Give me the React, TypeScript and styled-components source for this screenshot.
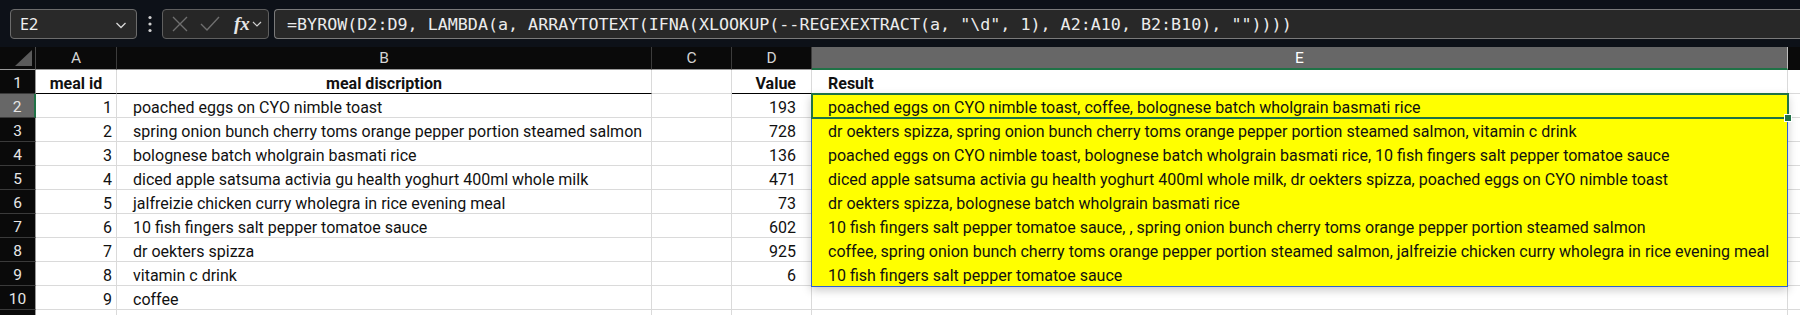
import styled, { createGlobalStyle } from 'styled-components'

const GlobalStyle = createGlobalStyle`
  html, body {
    margin: 0;
    padding: 0;
    background: #0a0a0a;
    overflow: hidden;
  }
`

type Row = [string | number, string, string, string | number, string]

const header: Row = ['meal id', 'meal discription', '', 'Value', 'Result']

const rows: Row[] = [
  [1, 'poached eggs on CYO nimble toast', '', 193, 'poached eggs on CYO nimble toast, coffee, bolognese batch wholgrain basmati rice'],
  [2, 'spring onion bunch cherry toms orange pepper portion steamed salmon', '', 728, 'dr oekters spizza, spring onion bunch cherry toms orange pepper portion steamed salmon, vitamin c drink'],
  [3, 'bolognese batch wholgrain basmati rice', '', 136, 'poached eggs on CYO nimble toast, bolognese batch wholgrain basmati rice, 10 fish fingers salt pepper tomatoe sauce'],
  [4, 'diced apple satsuma activia gu health yoghurt 400ml whole milk', '', 471, 'diced apple satsuma activia gu health yoghurt 400ml whole milk, dr oekters spizza, poached eggs on CYO nimble toast'],
  [5, 'jalfreizie chicken curry wholegra in rice evening meal', '', 73, 'dr oekters spizza, bolognese batch wholgrain basmati rice'],
  [6, '10 fish fingers salt pepper tomatoe sauce', '', 602, '10 fish fingers salt pepper tomatoe sauce, , spring onion bunch cherry toms orange pepper portion steamed salmon'],
  [7, 'dr oekters spizza', '', 925, 'coffee, spring onion bunch cherry toms orange pepper portion steamed salmon, jalfreizie chicken curry wholegra in rice evening meal'],
  [8, 'vitamin c drink', '', 6, '10 fish fingers salt pepper tomatoe sauce'],
  [9, 'coffee', '', '', ''],
  ['', '', '', '', ''],
]

const columns = ['A', 'B', 'C', 'D', 'E']
const formula = '=BYROW(D2:D9, LAMBDA(a, ARRAYTOTEXT(IFNA(XLOOKUP(--REGEXEXTRACT(a, "\\d", 1), A2:A10, B2:B10), ""))))'

const App = () => {
  return (
    <Page>
      <GlobalStyle />
      <FormulaBar>
        <NameBox>
          <span>E2</span>
          <Chevron width="14" height="14" viewBox="0 0 14 14">
            <path d="M2.5 5 L7 9.5 L11.5 5" fill="none" stroke="#d8d8d8" strokeWidth="1.3" />
          </Chevron>
        </NameBox>
        <Dots>
          <svg width="6" height="20" viewBox="0 0 6 20">
            <circle cx="3" cy="3.5" r="1.6" fill="#d0d0d0" />
            <circle cx="3" cy="10" r="1.6" fill="#d0d0d0" />
            <circle cx="3" cy="16.5" r="1.6" fill="#d0d0d0" />
          </svg>
        </Dots>
        <ButtonBox>
          <svg width="20" height="20" viewBox="0 0 20 20">
            <path d="M3 3 L17 17 M17 3 L3 17" stroke="#6f6f6f" strokeWidth="1.4" fill="none" />
          </svg>
          <svg width="22" height="20" viewBox="0 0 22 20">
            <path d="M2 10 L8 16 L20 3" stroke="#6f6f6f" strokeWidth="1.4" fill="none" />
          </svg>
          <Fx>fx</Fx>
          <svg width="12" height="12" viewBox="0 0 12 12">
            <path d="M2 4 L6 8 L10 4" fill="none" stroke="#cfcfcf" strokeWidth="1.2" />
          </svg>
        </ButtonBox>
        <FormulaInput>{formula}</FormulaInput>
      </FormulaBar>

      <Sheet>
        <Corner>
          <svg width="17" height="16" viewBox="0 0 17 16">
            <polygon points="17,0 17,16 0,16" fill="#5b5b5b" />
          </svg>
        </Corner>
        {columns.map((c) => (
          <ColHead key={c} $active={c === 'E'}>{c}</ColHead>
        ))}
        <ColHead $edge />

        <RowHead>1</RowHead>
        <Cell $align="center" $bold $rule>{header[0]}</Cell>
        <Cell $align="center" $bold $rule>{header[1]}</Cell>
        <Cell />
        <Cell $align="right" $bold $rule $indent>{header[3]}</Cell>
        <Cell $bold $pad>{header[4]}</Cell>
        <Gutter />

        {rows.map((r, i) => {
          const n = i + 2
          const spill = n >= 2 && n <= 9
          return [
            // row 11 is only a sliver at the bottom edge, its number falls outside
            <RowHead key={`h${n}`} $active={n === 2}>{n <= 10 ? n : ''}</RowHead>,
            <Cell key={`a${n}`} $align="right">{r[0]}</Cell>,
            <Cell key={`b${n}`} $pad>{r[1]}</Cell>,
            <Cell key={`c${n}`}>{r[2]}</Cell>,
            <Cell key={`d${n}`} $align="right" $indent>{r[3]}</Cell>,
            <Cell key={`e${n}`} $pad $fill={spill}>{r[4]}</Cell>,
            <Gutter key={`g${n}`} />,
          ]
        })}

        <SpillFrame />
        <ActiveCell>
          <Handle />
        </ActiveCell>
      </Sheet>
    </Page>
  )
}

const Page = styled.div`
  width: 1800px;
  height: 315px;
  overflow: hidden;
  background: #0a0a0a;
`

const FormulaBar = styled.div`
  display: flex;
  align-items: center;
  height: 47px;
  box-sizing: border-box;
  padding: 0 0 0 10px;
  background: #0d1118;
`

const NameBox = styled.div`
  display: flex;
  align-items: center;
  justify-content: space-between;
  width: 127px;
  height: 30px;
  box-sizing: border-box;
  padding: 0 8px 0 9px;
  border: 1px solid #6c6c6c;
  border-radius: 4px;
  background: #292929;
  color: #f2f2f2;
  font-family: 'Noto Sans', sans-serif;
  font-size: 16px;
`

const Chevron = styled.svg`
  margin-top: 2px;
`

const Dots = styled.div`
  display: flex;
  align-items: center;
  justify-content: center;
  width: 25px;
  height: 30px;
`

const ButtonBox = styled.div`
  display: flex;
  align-items: center;
  gap: 9px;
  width: 107px;
  height: 30px;
  box-sizing: border-box;
  padding: 0 4px 0 7px;
  border: 1px solid #5f5f5f;
  border-radius: 4px;
  background: #262626;
`

const Fx = styled.span`
  margin-left: 4px;
  margin-right: -8px;
  color: #e6e6e6;
  font-family: 'Liberation Serif', serif;
  font-style: italic;
  font-weight: bold;
  font-size: 19px;
  line-height: 1;
`

const FormulaInput = styled.div`
  flex: 1;
  display: flex;
  align-items: center;
  height: 30px;
  margin-left: 5px;
  box-sizing: border-box;
  padding-left: 12px;
  border: 1px solid #7a7a7a;
  border-right: none;
  border-radius: 4px 0 0 4px;
  background: #282828;
  color: #ececec;
  font-family: 'DejaVu Sans Mono', monospace;
  font-size: 16.7px;
  white-space: pre;
  overflow: hidden;
`

const Sheet = styled.div`
  position: relative;
  display: grid;
  grid-template-columns: 36px 81px 535px 80px 80px 976px 12px;
  grid-template-rows: 23px repeat(11, 24px);
  font-family: Roboto, 'Liberation Sans', sans-serif;
`

const Corner = styled.div`
  display: flex;
  align-items: flex-end;
  justify-content: flex-end;
  padding: 0 3px 3px 0;
  background: #0a0a0a;
  border-right: 1px solid #4a4a4a;
  border-bottom: 1px solid #9a9a9a;
`

const ColHead = styled.div<{ $active?: boolean; $edge?: boolean }>`
  display: flex;
  align-items: center;
  justify-content: center;
  box-sizing: border-box;
  background: ${({ $active }) => ($active ? '#676767' : '#0a0a0a')};
  color: ${({ $active }) => ($active ? '#ffffff' : '#d4d4d4')};
  font-size: 15.5px;
  border-right: 1px solid ${({ $edge, $active }) => ($edge ? 'transparent' : $active ? '#bdbdbd' : '#3c3c3c')};
  border-bottom: ${({ $active, $edge }) =>
    $active ? '2px solid #1f7246' : $edge ? 'none' : '1px solid #9a9a9a'};
`

const RowHead = styled.div<{ $active?: boolean }>`
  display: flex;
  align-items: center;
  justify-content: center;
  box-sizing: border-box;
  padding-top: 2px;
  background: ${({ $active }) => ($active ? '#676767' : '#0a0a0a')};
  color: #e6e6e6;
  font-size: 15.5px;
  border-bottom: 1px solid #3a3a3a;
  border-right: ${({ $active }) => ($active ? '2px solid #1f7246' : '1px solid #9a9a9a')};
`

const Cell = styled.div<{
  $align?: 'left' | 'center' | 'right'
  $bold?: boolean
  $rule?: boolean
  $pad?: boolean
  $indent?: boolean
  $fill?: boolean
}>`
  display: flex;
  align-items: center;
  justify-content: ${({ $align }) =>
    $align === 'right' ? 'flex-end' : $align === 'center' ? 'center' : 'flex-start'};
  box-sizing: border-box;
  padding: 3px ${({ $indent }) => ($indent ? '15px' : '4px')} 0 ${({ $pad }) => ($pad ? '16px' : '4px')};
  background: ${({ $fill }) => ($fill ? '#ffff00' : '#ffffff')};
  color: #111111;
  font-size: 16px;
  font-weight: ${({ $bold }) => ($bold ? 700 : 400)};
  white-space: nowrap;
  overflow: visible;
  border-right: 1px solid ${({ $fill }) => ($fill ? '#ffff00' : '#dadada')};
  border-bottom: 1px solid ${({ $rule, $fill }) => ($rule ? '#000000' : $fill ? '#ffff00' : '#dadada')};
`

const Gutter = styled.div`
  background: #ffffff;
  border-bottom: 1px solid #dadada;
`

const SpillFrame = styled.div`
  position: absolute;
  left: 811px;
  top: 47px;
  width: 977px;
  height: 193px;
  box-sizing: border-box;
  border: 1px solid #2d5fd3;
  box-shadow: 0 3px 9px rgba(0, 0, 0, 0.22);
  pointer-events: none;
`

const ActiveCell = styled.div`
  position: absolute;
  left: 811px;
  top: 46px;
  width: 978px;
  height: 26px;
  box-sizing: border-box;
  border: 2px solid #1f7246;
  pointer-events: none;
`

const Handle = styled.div`
  position: absolute;
  right: -5px;
  bottom: -5px;
  width: 6px;
  height: 6px;
  background: #1f7246;
  border: 1px solid #ffffff;
`

export default App
